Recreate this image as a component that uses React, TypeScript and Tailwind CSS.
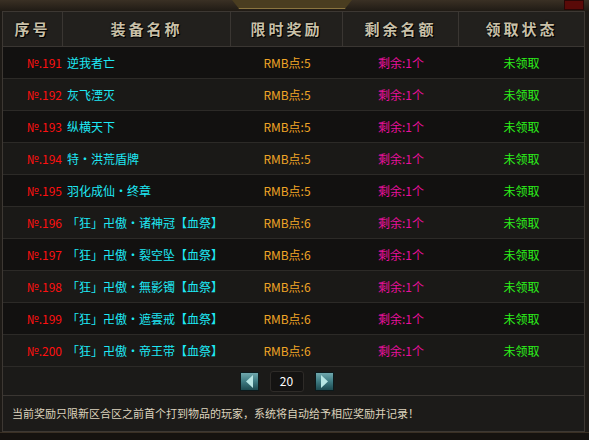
import React from "react";

interface Item {
    no: number;
    name: string;
    reward: string;
}

const items: Item[] = [
    { no: 191, name: "逆我者亡", reward: "RMB点:5" },
    { no: 192, name: "灰飞湮灭", reward: "RMB点:5" },
    { no: 193, name: "纵横天下", reward: "RMB点:5" },
    { no: 194, name: "特・洪荒盾牌", reward: "RMB点:5" },
    { no: 195, name: "羽化成仙・终章", reward: "RMB点:5" },
    { no: 196, name: "「狂」卍傲・诸神冠【血祭】", reward: "RMB点:6" },
    { no: 197, name: "「狂」卍傲・裂空坠【血祭】", reward: "RMB点:6" },
    { no: 198, name: "「狂」卍傲・無影镯【血祭】", reward: "RMB点:6" },
    { no: 199, name: "「狂」卍傲・遮雲戒【血祭】", reward: "RMB点:6" },
    { no: 200, name: "「狂」卍傲・帝王带【血祭】", reward: "RMB点:6" },
];

const cols = "grid grid-cols-[60px_168px_112px_116px_1fr]";

function Header() {
    const titles = ["序号", "装备名称", "限时奖励", "剩余名额", "领取状态"];
    return (
        <div className={`${cols} h-[35px] bg-[#22201d] border-b border-[#3a3632]`}>
            {titles.map((t, i) => (
                <div
                    key={t}
                    className={`flex items-center justify-center text-[15px] font-bold tracking-[3px] text-[#c9c0a8] [text-shadow:1px_1px_0_#000,0_0_2px_#000] ${i < 4 ? "border-r border-[#3a3632]" : ""}`}
                >
                    {t}
                </div>
            ))}
        </div>
    );
}

function Row({ item, odd }: { item: Item; odd: boolean }) {
    return (
        <div className={`${cols} h-[32px] items-center text-[12px] border-b border-[#2c2a27] ${odd ? "bg-[#121110]" : "bg-[#1a1917]"}`}>
            <div className="text-right text-[#ff1010] pr-[1px]">№.{item.no}</div>
            <div className="pl-[4px] text-[#1ee8f4] whitespace-nowrap">{item.name}</div>
            <div className="text-center text-[#f0a526]">{item.reward}</div>
            <div className="text-center text-[#e8109c]">剩余:1个</div>
            <div className="text-center text-[#2cf21a]">未领取</div>
        </div>
    );
}

function ArrowButton({ dir }: { dir: "left" | "right" }) {
    return (
        <div className="w-[19px] h-[19px] border border-[#0c1a1c] bg-gradient-to-b from-[#6fa8ad] via-[#3e7b82] to-[#1d4a50] flex items-center justify-center">
            <svg width="9" height="13" viewBox="0 0 9 13">
                {dir === "left" ? (
                    <polygon points="8,0 8,13 1,6.5" fill="#b8e6e4" />
                ) : (
                    <polygon points="1,0 1,13 8,6.5" fill="#b8e6e4" />
                )}
            </svg>
        </div>
    );
}

export default function App() {
    return (
        <div className="w-[589px] h-[440px] bg-[#1d1a16] overflow-hidden relative" style={{ fontFamily: '"Noto Sans CJK SC", "Liberation Sans", sans-serif' }}>
            {/* top frame */}
            <div className="h-[11px] bg-gradient-to-b from-[#3a3024] to-[#201b15] relative">
                <div className="absolute left-[232px] w-[120px] top-0 h-[9px] bg-[#4a3d20] border-b border-[#8a7440] [clip-path:polygon(0_0,100%_0,94%_100%,6%_100%)]" />
                <div className="absolute right-[5px] top-0 w-[20px] h-[10px] bg-[#5a0a08] border border-[#2a0606]" />
            </div>

            <div className="ml-[2px] mr-[4px] border border-[#3d3833] bg-[#1b1a18]">
                <Header />
                {items.map((it, i) => (
                    <Row key={it.no} item={it} odd={i % 2 === 0} />
                ))}

                <div className="h-[29px] flex items-center justify-center gap-[11px] pr-[14px] border-b border-[#3a3632] bg-[#1b1a18]">
                    <ArrowButton dir="left" />
                    <div className="w-[34px] h-[21px] rounded-[3px] border border-[#2e2b28] bg-[#141312] flex items-center justify-center text-[12px] text-white">
                        20
                    </div>
                    <ArrowButton dir="right" />
                </div>

                <div className="h-[35px] flex items-center pl-[9px] text-[11px] text-[#ddd3bd] bg-[#1c1b19]">
                    当前奖励只限新区合区之前首个打到物品的玩家，系统将自动给予相应奖励并记录！
                </div>
            </div>

            <div className="h-[8px] bg-[#15120f] border-t border-[#3a3024]" />
        </div>
    );
}
